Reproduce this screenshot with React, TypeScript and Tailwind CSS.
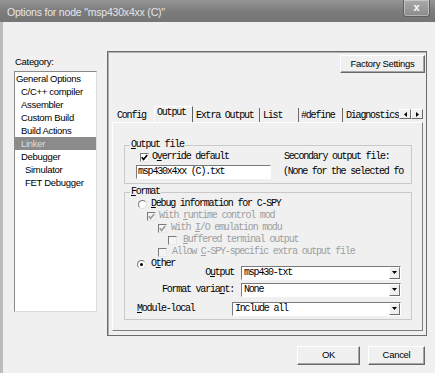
import React from "react";

const MONO = "font-['Liberation_Mono','Courier_New',monospace] text-[10px] leading-[12px] tracking-[-1.2px]";

function Check({ checked, disabled }: { checked?: boolean; disabled?: boolean }) {
  return (
    <span
      className={`w-[9px] h-[9px] shrink-0 flex items-center justify-center border border-t-[#7a7a7a] border-l-[#7a7a7a] border-r-[#e8e8e8] border-b-[#e8e8e8] ${
        disabled ? "bg-[#f4f4f4]" : "bg-white"
      }`}
    >
      {checked && (
        <svg width="7" height="7" viewBox="0 0 7 7">
          <polyline
            points="0.8,3.2 2.6,5.4 6.2,1"
            fill="none"
            stroke={disabled ? "#9a9a9a" : "#000"}
            strokeWidth="1.6"
          />
        </svg>
      )}
    </span>
  );
}

function Radio({ checked }: { checked?: boolean }) {
  return (
    <span className="w-[9px] h-[9px] shrink-0 rounded-full flex items-center justify-center border border-t-[#7a7a7a] border-l-[#7a7a7a] border-r-[#dcdcdc] border-b-[#dcdcdc] bg-white">
      {checked && <span className="w-[3px] h-[3px] rounded-full bg-black" />}
    </span>
  );
}

function Dropdown({ value, width }: { value: string; width: string }) {
  return (
    <div
      className={`${width} h-[14px] shrink-0 flex border border-t-[#7a7a7a] border-l-[#7a7a7a] border-r-white border-b-white bg-white`}
    >
      <span className={`flex-1 pl-[2px] ${MONO} text-black whitespace-nowrap`}>{value}</span>
      <span className="w-[11px] h-full flex items-center justify-center bg-[#f0f0f0] border border-t-white border-l-white border-r-[#6e6e6e] border-b-[#6e6e6e]">
        <svg width="5" height="4" viewBox="0 0 5 4">
          <polygon points="0,0 5,0 2.5,3" fill="#000" />
        </svg>
      </span>
    </div>
  );
}

function Button({ label, width }: { label: string; width: string }) {
  return (
    <div
      className={`${width} flex items-center justify-center bg-[#f0f0f0] border border-t-white border-l-white border-r-[#696969] border-b-[#696969] shadow-[inset_-1px_-1px_0_#a6a6a6] text-[9.5px] tracking-[-0.3px] text-black`}
    >
      {label}
    </div>
  );
}

const listItems: { label: string; indent: string; selected?: boolean }[] = [
  { label: "General Options", indent: "pl-[1px]" },
  { label: "C/C++ compiler", indent: "pl-[6px]" },
  { label: "Assembler", indent: "pl-[6px]" },
  { label: "Custom Build", indent: "pl-[6px]" },
  { label: "Build Actions", indent: "pl-[6px]" },
  { label: "Linker", indent: "pl-[6px]", selected: true },
  { label: "Debugger", indent: "pl-[6px]" },
  { label: "Simulator", indent: "pl-[10px]" },
  { label: "FET Debugger", indent: "pl-[10px]" },
];

export default function App() {
  return (
    <div className="w-[435px] h-[373px] overflow-hidden bg-[#f0f0f0] flex flex-col font-['Liberation_Sans',Arial,sans-serif] text-black">
      {/* Title bar */}
      <div className="h-[22px] shrink-0 flex items-start bg-gradient-to-b from-[#959595] via-[#7c7c7c] to-[#757575]">
        <span className="ml-[7px] mt-[6px] text-[10.5px] leading-[12px] text-[#e6e6e6] tracking-[-0.2px]">
          Options for node "msp430x4xx (C)"
        </span>
        <div className="ml-auto mr-[5px] w-[27px] h-[17px] flex items-center justify-center rounded-b-[3px] bg-gradient-to-b from-[#a9a9a9] to-[#8c8c8c] border border-t-0 border-[#606060] shadow-[inset_0_0_0_1px_rgba(255,255,255,0.35)]">
          <span className="text-[11px] leading-[11px] font-bold text-white -mt-[1px]">x</span>
        </div>
      </div>

      {/* Body */}
      <div className="flex-1 flex border-l-[3px] border-[#bcbcbc]">
        {/* Left column */}
        <div className="ml-[11px] w-[83px] pt-[34px] flex flex-col">
          <div className="h-[12px] leading-[12px] text-[9.5px] tracking-[-0.3px] pl-[1px]">Category:</div>
          <div className="mt-[3px] h-[241px] bg-white border border-t-[#8a8a8a] border-l-[#8a8a8a] border-r-[#dcdcdc] border-b-[#dcdcdc] flex flex-col">
            {listItems.map((it) => (
              <div
                key={it.label}
                className={`h-[13px] leading-[13px] text-[9.5px] tracking-[-0.3px] whitespace-nowrap ${it.indent} ${
                  it.selected ? "bg-[#8b8b8b] text-[#dedede]" : "text-black"
                }`}
              >
                {it.label}
              </div>
            ))}
          </div>
        </div>

        {/* Right column */}
        <div className="ml-[10px] w-[320px] pt-[29px] flex flex-col">
          <div className="h-[285px] border border-[#6c6c6c] shadow-[inset_1px_1px_0_#b0b0b0] flex flex-col">
            <div className="flex justify-end pr-[1px] pt-[3px]">
              <div className="h-[18px] flex">
                <Button label="Factory Settings" width="w-[85px]" />
              </div>
            </div>

            {/* Tabs */}
            <div className={`mt-[33px] ml-[4px] h-[16px] flex items-start ${MONO} text-black`}>
              <div className="w-[42px] h-[14px] mt-[2px] pl-[5px] pt-[2px] whitespace-nowrap">Config</div>
              <div className="w-[39px] h-[16px] pl-[2px] border-l border-t border-r border-l-white border-t-white border-r-[#5e5e5e] whitespace-nowrap">
                Output
              </div>
              <div className="w-[67px] h-[14px] mt-[2px] pl-[3px] pt-[2px] border-r border-[#6a6a6a] whitespace-nowrap">
                Extra Output
              </div>
              <div className="w-[39px] h-[14px] mt-[2px] pl-[3px] pt-[2px] border-r border-[#6a6a6a] whitespace-nowrap">
                List
              </div>
              <div className="w-[44px] h-[14px] mt-[2px] pl-[2px] pt-[2px] border-r border-[#6a6a6a] whitespace-nowrap">
                #define
              </div>
              <div className="w-[56px] h-[14px] mt-[2px] pl-[3px] pt-[2px] overflow-hidden whitespace-nowrap">
                Diagnostics
              </div>
              <div className="mt-[3px] flex">
                <div className="w-[12px] h-[10px] flex items-center justify-center bg-[#f0f0f0] border border-t-white border-l-white border-r-[#6a6a6a] border-b-[#6a6a6a]">
                  <svg width="3" height="5" viewBox="0 0 3 5">
                    <polygon points="3,0 3,5 0,2.5" fill="#000" />
                  </svg>
                </div>
                <div className="w-[12px] h-[10px] flex items-center justify-center bg-[#f0f0f0] border border-t-white border-l-white border-r-[#6a6a6a] border-b-[#6a6a6a]">
                  <svg width="3" height="5" viewBox="0 0 3 5">
                    <polygon points="0,0 0,5 3,2.5" fill="#000" />
                  </svg>
                </div>
              </div>
            </div>

            {/* Tab panel */}
            <div className={`ml-[4px] mr-[3px] h-[209px] border border-t-white border-l-white border-r-[#808080] border-b-[#808080] flex flex-col ${MONO} text-black`}>
              {/* Output file group */}
              <fieldset className="ml-[11px] w-[288px] min-w-0 mt-[16px] border border-[#c9c9c9] pb-[4px]">
                <legend className="ml-[5px] px-[1px] leading-[12px]">
                  <span className="underline">O</span>utput file
                </legend>
                <div className="flex h-[12px] items-center">
                  <div className="w-[158px] shrink-0 pl-[15px] flex items-center gap-[3px]">
                    <Check checked />
                    <span className="whitespace-nowrap">
                      O<span className="underline">v</span>erride default
                    </span>
                  </div>
                  <div className="pl-[1px] whitespace-nowrap">Secondary output file:</div>
                </div>
                <div className="flex mt-[2px] h-[14px] items-center">
                  <div className="w-[158px] shrink-0 pl-[11px]">
                    <div className="w-[135px] h-[14px] bg-white border border-t-[#7a7a7a] border-l-[#7a7a7a] border-r-white border-b-white pl-[1px] whitespace-nowrap overflow-hidden">
                      msp430x4xx (C).txt
                    </div>
                  </div>
                  <div className="w-[121px] shrink-0 overflow-hidden whitespace-nowrap">
                    (None for the selected format)
                  </div>
                </div>
              </fieldset>

              {/* Format group */}
              <fieldset className="ml-[11px] w-[288px] min-w-0 mt-[2px] border border-[#c9c9c9] pb-[3px]">
                <legend className="ml-[5px] px-[1px] leading-[12px]">
                  <span className="underline">F</span>ormat
                </legend>
                <div className="h-[12px] flex items-center pl-[13px] gap-[4px]">
                  <Radio />
                  <span className="whitespace-nowrap">
                    <span className="underline">D</span>ebug information for C-SPY
                  </span>
                </div>
                <div className="h-[12px] flex items-center pl-[22px] gap-[3px] text-[#9e9e9e]">
                  <Check checked disabled />
                  <span className="whitespace-nowrap">
                    With <span className="underline">r</span>untime control mod
                  </span>
                </div>
                <div className="h-[12px] flex items-center pl-[33px] gap-[4px] text-[#9e9e9e]">
                  <Check checked disabled />
                  <span className="whitespace-nowrap">
                    With <span className="underline">I</span>/O emulation modu
                  </span>
                </div>
                <div className="h-[12px] flex items-center pl-[43px] gap-[6px] text-[#9e9e9e]">
                  <Check disabled />
                  <span className="whitespace-nowrap">
                    <span className="underline">B</span>uffered terminal output
                  </span>
                </div>
                <div className="h-[12px] flex items-center pl-[33px] gap-[5px] text-[#9e9e9e]">
                  <Check disabled />
                  <span className="whitespace-nowrap">
                    Allow <span className="underline">C</span>-SPY-specific extra output file
                  </span>
                </div>
                <div className="h-[12px] flex items-center pl-[12px] gap-[5px]">
                  <Radio checked />
                  <span className="whitespace-nowrap">
                    O<span className="underline">t</span>her
                  </span>
                </div>
                <div className="-mt-[4px] h-[14px] flex items-center">
                  <div className="w-[110px] text-right pr-[1px] whitespace-nowrap">
                    O<span className="underline">u</span>tput
                  </div>
                  <div className="ml-[6px]">
                    <Dropdown value="msp430-txt" width="w-[160px]" />
                  </div>
                </div>
                <div className="mt-[3px] h-[14px] flex items-center">
                  <div className="w-[110px] text-right pr-[1px] whitespace-nowrap">
                    Format varia<span className="underline">n</span>t:
                  </div>
                  <div className="ml-[6px]">
                    <Dropdown value="None" width="w-[160px]" />
                  </div>
                </div>
                <div className="mt-[5px] h-[14px] flex items-center">
                  <div className="w-[107px] pl-[12px] whitespace-nowrap">
                    <span className="underline">M</span>odule-local
                  </div>
                  <Dropdown value="Include all" width="w-[169px]" />
                </div>
              </fieldset>
            </div>
          </div>

          {/* Dialog buttons */}
          <div className="mt-[10px] flex justify-end gap-[8px] pr-[2px]">
            <div className="h-[19px] flex">
              <Button label="OK" width="w-[63px]" />
            </div>
            <div className="h-[19px] flex">
              <Button label="Cancel" width="w-[57px]" />
            </div>
          </div>
        </div>
      </div>
    </div>
  );
}
